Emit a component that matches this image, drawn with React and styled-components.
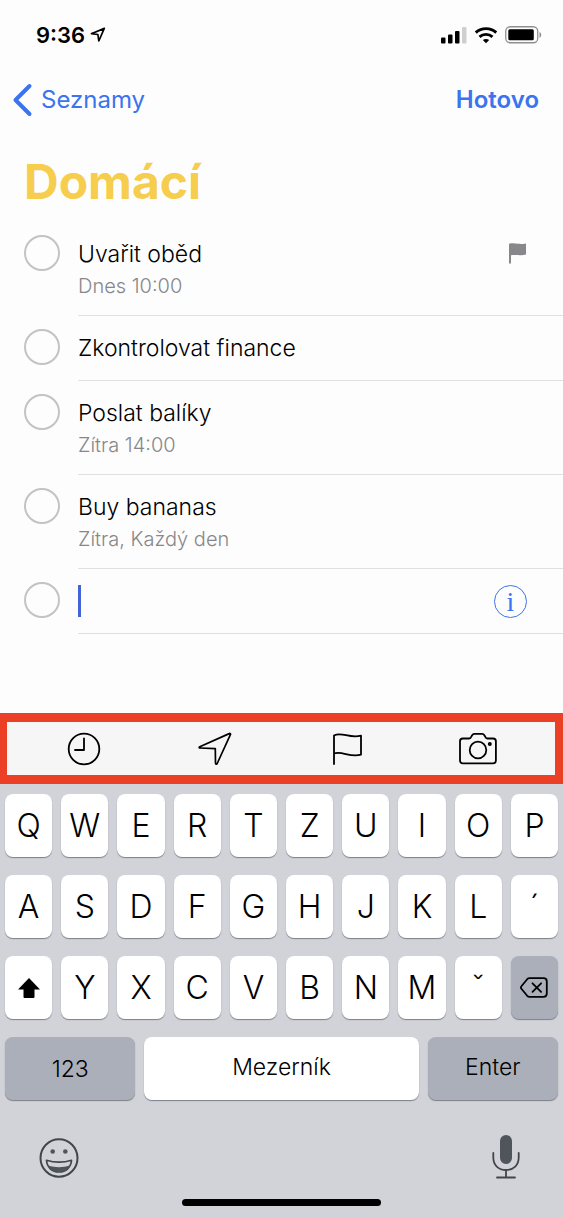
import React from "react";
import styled, { createGlobalStyle } from "styled-components";

const GlobalStyle = createGlobalStyle`
  *, *::before, *::after { box-sizing: border-box; }
  body {
    margin: 0;
    background: #fdfdfd;
    color: #000;
    font-family: Inter, "Liberation Sans", sans-serif;
  }
  button, input { font: inherit; color: inherit; margin: 0; padding: 0; border: 0; background: none; }
  button { cursor: pointer; }
  svg { display: block; }
`;

const Screen = styled.div`
  display: flex;
  flex-direction: column;
  min-height: 100vh;
`;

const StatusBar = styled.header`
  display: flex;
  justify-content: space-between;
  align-items: center;
  height: 70px;
  padding: 0 21px 0 36px;
`;

const StatusGroup = styled.div`
  display: flex;
  align-items: center;
  gap: ${(p) => p.$gap}px;
  font-size: 22px;
  font-weight: 600;
  line-height: 28px;
`;

const NavBar = styled.nav`
  display: flex;
  justify-content: space-between;
  align-items: center;
  height: 60px;
  padding: 0 24px 0 12px;
  color: #3a74ee;
  font-size: 24px;
  line-height: 32px;
`;

const BackLink = styled.a`
  display: flex;
  align-items: center;
  gap: 8px;
  color: inherit;
  text-decoration: none;
`;

const DoneButton = styled.button`
  font-weight: 600;
`;

const Title = styled.h1`
  margin: 0;
  padding: 22px 24px 10px;
  color: #f6cd4c;
  font-size: 48px;
  font-weight: 700;
  line-height: 60px;
`;

const List = styled.ul`
  flex: 1;
  margin: 0;
  padding: 0 0 40px 24px;
  list-style: none;
`;

const Item = styled.li`
  display: flex;
  gap: 18px;
`;

const Check = styled.input`
  appearance: none;
  flex: none;
  width: 36px;
  height: 36px;
  margin-top: 13px;
  border: 2px solid #c3c3c5;
  border-radius: 50%;
`;

const ItemBody = styled.div`
  display: flex;
  flex: 1;
  align-items: flex-start;
  justify-content: space-between;
  min-width: 0;
  padding: 16px 36px 15px 0;
  border-bottom: 1px solid #e0e0e1;
`;

const ItemLabel = styled.label`
  display: block;
  min-height: 33px;
  font-size: 23px;
  font-weight: 350;
  line-height: 32px;
`;

const ItemMeta = styled.div`
  margin-top: 2px;
  color: #87878b;
  font-size: 20px;
  font-weight: 350;
  line-height: 27px;
`;

const FlagMark = styled.span`
  padding-top: 5px;
`;

const Entry = styled.div`
  display: flex;
  flex: 1;
  height: 33px;
`;

const Caret = styled.span`
  width: 3px;
  height: 32px;
  background: #4463d8;
`;

const EntryInput = styled.input`
  flex: 1;
  min-width: 0;
  outline: none;
  font-size: 23px;
`;

const InfoButton = styled.button`
  width: 33px;
  height: 33px;
  border: 1px solid #3a74ee;
  border-radius: 50%;
  color: #3a74ee;
  font-family: "Liberation Serif", serif;
  font-size: 28px;
  line-height: 28px;
`;

const QuickBar = styled.div`
  display: flex;
  padding: 0 11px;
  border: solid #eb4025;
  border-width: 9px 8px 9px 7px;
  background: #f6f6f6;
`;

const QuickButton = styled.button`
  display: flex;
  flex: 1;
  align-items: center;
  justify-content: center;
  height: 53px;
`;

const Keyboard = styled.section`
  display: flex;
  flex-direction: column;
  gap: 18px;
  padding: 10px 5px 12px;
  background: #d1d3d9;
`;

const KeyRow = styled.div`
  display: flex;
  gap: 9px;
`;

const Key = styled.button`
  display: flex;
  flex: ${(p) => p.$grow || 1} 1 0;
  align-items: center;
  justify-content: center;
  min-width: 0;
  height: 63px;
  padding-bottom: ${(p) => (p.$raised ? 4 : 0)}px;
  border-radius: 8px;
  background: ${(p) => (p.$dark ? "#abafba" : "#fff")};
  box-shadow: 0 1px 1px #7d7f85;
  font-size: ${(p) => (p.$word ? 23 : 32)}px;
  font-weight: 350;
  line-height: 40px;
`;

const KeyboardFooter = styled.div`
  display: flex;
  align-items: center;
  justify-content: space-between;
  height: 80px;
  padding: 0 38px 0 34px;
`;

const FooterButton = styled.button`
  display: block;
`;

const HomeIndicator = styled.div`
  width: 36%;
  height: 7px;
  margin: -17px auto 0;
  border-radius: 4px;
  background: #000;
`;

const line = { fill: "none", stroke: "currentColor", strokeLinecap: "round", strokeLinejoin: "round" };

const StatusArrow = () => (
  <svg width="16" height="16" viewBox="0 0 16 16" {...line} strokeWidth="1.7">
    <path d="M14.3 1.4 1.4 6.7l6.5.8.9 6.5z" />
  </svg>
);

const Signal = () => (
  <svg width="26" height="17" viewBox="0 0 26 17">
    <rect x="0" y="10.500" width="4.500" height="6" rx="1" />
    <rect x="7" y="7.500" width="4.500" height="9" rx="1" />
    <rect x="14" y="4" width="4.500" height="12.500" rx="1" />
    <rect x="21" y="0" width="4.500" height="16.500" rx="1" fill="#cfcfcf" />
  </svg>
);

const Wifi = () => (
  <svg width="22" height="17" viewBox="0 0 22 17" fill="none" stroke="#000" strokeWidth="2.900">
    <path d="M.8 5.600C6.500.3 15.500.3 21.200 5.600" />
    <path d="M4.500 9.800c3.700-3.300 9.300-3.300 13 0" />
    <path d="M7.800 13c2.100-1.500 4.300-1.500 6.400 0L11 16.200z" fill="#000" stroke="none" />
  </svg>
);

const Battery = () => (
  <svg width="37" height="18" viewBox="0 0 37 18">
    <rect x=".75" y=".75" width="32" height="16" rx="4.500" fill="none" stroke="#8f8f8f" strokeWidth="1.300" />
    <rect x="3.300" y="3.300" width="25.500" height="11" rx="1.500" />
    <path d="M34.500 6c2.300.8 2.300 5 0 5.800z" fill="#8f8f8f" />
  </svg>
);

const BackChevron = () => (
  <svg width="21" height="34" viewBox="0 0 21 34" {...line} strokeWidth="4">
    <path d="M17.500 3 3.500 17l14 14" />
  </svg>
);

const SmallFlag = () => (
  <svg width="18" height="22" viewBox="0 0 18 22" fill="#88878c">
    <path d="M0 .8C4-.2 6 .6 9 .8c3 .2 5 .2 8-.4v11.200c-3 .8-5 .8-8 .5-3-.3-5-.3-7 .1V20.500H0z" />
  </svg>
);

const Clock = () => (
  <svg width="34" height="34" viewBox="0 0 34 34" {...line} strokeWidth="1.800">
    <circle cx="17" cy="17" r="15.300" />
    <path d="M17 6.500V18H8" />
  </svg>
);

const LocationArrow = () => (
  <svg width="34" height="34" viewBox="0 0 34 34" {...line} strokeWidth="1.700">
    <path d="M31.200 1.600 1.800 14.700c-.9.400-.7 1.300.2 1.300l15.300.6.200 14.600c0 1.100 1.200 1.200 1.700.3L32.400 2.700c.4-.8-.4-1.500-1.200-1.100z" />
  </svg>
);

const Flag = () => (
  <svg width="30" height="34" viewBox="0 0 30 34" {...line} strokeWidth="1.800">
    <path d="M2 32V3.500C9.500-.8 17.500 7 29 3.700v19C18 26 10 18.500 2 21.500" />
  </svg>
);

const Camera = () => (
  <svg width="38" height="34" viewBox="0 0 38 34" {...line} strokeWidth="1.800">
    <path d="M3.800 6.500h6.400c1.800 0 2-1.800 2.900-3.200.5-.9 1.200-1.500 2.300-1.500h7.700c1.100 0 1.800.6 2.300 1.500.9 1.400 1.100 3.200 2.900 3.200h5.800c1.700 0 2.800 1.100 2.800 2.800v19.200c0 1.700-1.100 2.800-2.800 2.800H3.800C2.100 31.300 1 30.200 1 28.500V9.300c0-1.700 1.100-2.800 2.800-2.800z" />
    <circle cx="19" cy="18" r="8.300" />
    <circle cx="30.800" cy="12" r="1.100" />
  </svg>
);

const Shift = () => (
  <svg width="22" height="20" viewBox="0 0 22 20">
    <path d="M11 0 22 11.500h-5.500V19q0 1-1 1h-9q-1 0-1-1v-7.500H0z" />
  </svg>
);

const Backspace = () => (
  <svg width="28" height="21" viewBox="0 0 28 21" {...line} strokeWidth="1.800">
    <path d="M9.500 1.200h14c2.200 0 3.300 1.100 3.300 3.300v12c0 2.200-1.100 3.300-3.300 3.300h-14c-1 0-1.600-.3-2.300-1L1.600 12c-.9-1-.9-2 0-3l5.600-6.800c.7-.7 1.300-1 2.300-1z" />
    <path d="m12.500 6.300 8.600 8.600m0-8.600-8.600 8.600" />
  </svg>
);

const Emoji = () => (
  <svg width="40" height="42" viewBox="0 0 40 42" {...line} stroke="#42454b" strokeWidth="2">
    <ellipse cx="20" cy="21" rx="18.500" ry="18.700" />
    <circle cx="13.700" cy="14.500" r="2.300" fill="#50545b" stroke="none" />
    <circle cx="26.300" cy="14.500" r="2.300" fill="#50545b" stroke="none" />
    <path d="M7.500 23.300c8 2.400 17 2.400 25 0-.5 7-5.500 11.700-12.500 11.700S8 30.300 7.500 23.300z" strokeWidth="1.700" />
    <path d="M9.500 28.500c6.500 2.300 14.500 2.300 21 0C28.500 33 25 35 20 35s-8.500-2-10.500-6.500z" fill="#50545b" stroke="none" />
  </svg>
);

const Mic = () => (
  <svg width="28" height="46" viewBox="0 0 28 46" {...line} stroke="#42454b" strokeWidth="1.800">
    <rect x="8" y="0" width="12" height="29" rx="6" fill="#50545b" stroke="none" />
    <path d="M1.300 18v4.500c0 7.500 5 12.500 12.700 12.500s12.700-5 12.700-12.500V18M14 35v7.500M5 42.500h18" />
  </svg>
);

const reminders = [
  { id: "obed", title: "Uvařit oběd", meta: "Dnes 10:00", flagged: true },
  { id: "finance", title: "Zkontrolovat finance" },
  { id: "baliky", title: "Poslat balíky", meta: "Zítra 14:00" },
  { id: "bananas", title: "Buy bananas", meta: "Zítra, Každý den" },
];

const quickActions = [
  { name: "Čas", Icon: Clock },
  { name: "Poloha", Icon: LocationArrow },
  { name: "Vlajka", Icon: Flag },
  { name: "Fotoaparát", Icon: Camera },
];

export default function App() {
  return (
    <>
      <GlobalStyle />
      <Screen>
        <StatusBar>
          <StatusGroup $gap={5}>
            <span>9:36</span>
            <StatusArrow />
          </StatusGroup>
          <StatusGroup $gap={8}>
            <Signal />
            <Wifi />
            <Battery />
          </StatusGroup>
        </StatusBar>
        <NavBar>
          <BackLink href="#seznamy">
            <BackChevron />
            Seznamy
          </BackLink>
          <DoneButton type="button">Hotovo</DoneButton>
        </NavBar>
        <Title>Domácí</Title>
        <List>
          {reminders.map((r) => (
            <Item key={r.id}>
              <Check type="checkbox" id={r.id} />
              <ItemBody>
                <div>
                  <ItemLabel htmlFor={r.id}>{r.title}</ItemLabel>
                  {r.meta && <ItemMeta>{r.meta}</ItemMeta>}
                </div>
                {r.flagged && <FlagMark><SmallFlag /></FlagMark>}
              </ItemBody>
            </Item>
          ))}
          <Item>
            <Check type="checkbox" aria-label="Nová připomínka" />
            <ItemBody>
              <Entry>
                <Caret />
                <EntryInput type="text" aria-label="Název připomínky" />
              </Entry>
              <InfoButton type="button" aria-label="Podrobnosti">i</InfoButton>
            </ItemBody>
          </Item>
        </List>
        <QuickBar>
          {quickActions.map(({ name, Icon }) => (
            <QuickButton key={name} type="button" aria-label={name}>
              <Icon />
            </QuickButton>
          ))}
        </QuickBar>
        <Keyboard>
          {["QWERTZUIOP", "ASDFGHJKL´"].map((row) => (
            <KeyRow key={row}>
              {[...row].map((c) => (
                <Key key={c} type="button">{c}</Key>
              ))}
            </KeyRow>
          ))}
          <KeyRow>
            <Key type="button" aria-label="Shift"><Shift /></Key>
            {[..."YXCVBNMˇ"].map((c) => (
              <Key key={c} type="button">{c}</Key>
            ))}
            <Key type="button" $dark aria-label="Smazat"><Backspace /></Key>
          </KeyRow>
          <KeyRow>
            <Key type="button" $word $dark $grow={10}>123</Key>
            <Key type="button" $word $raised $grow={21}>Mezerník</Key>
            <Key type="button" $word $raised $dark $grow={10}>Enter</Key>
          </KeyRow>
          <KeyboardFooter>
            <FooterButton type="button" aria-label="Emoji"><Emoji /></FooterButton>
            <FooterButton type="button" aria-label="Diktování"><Mic /></FooterButton>
          </KeyboardFooter>
          <HomeIndicator />
        </Keyboard>
      </Screen>
    </>
  );
}
